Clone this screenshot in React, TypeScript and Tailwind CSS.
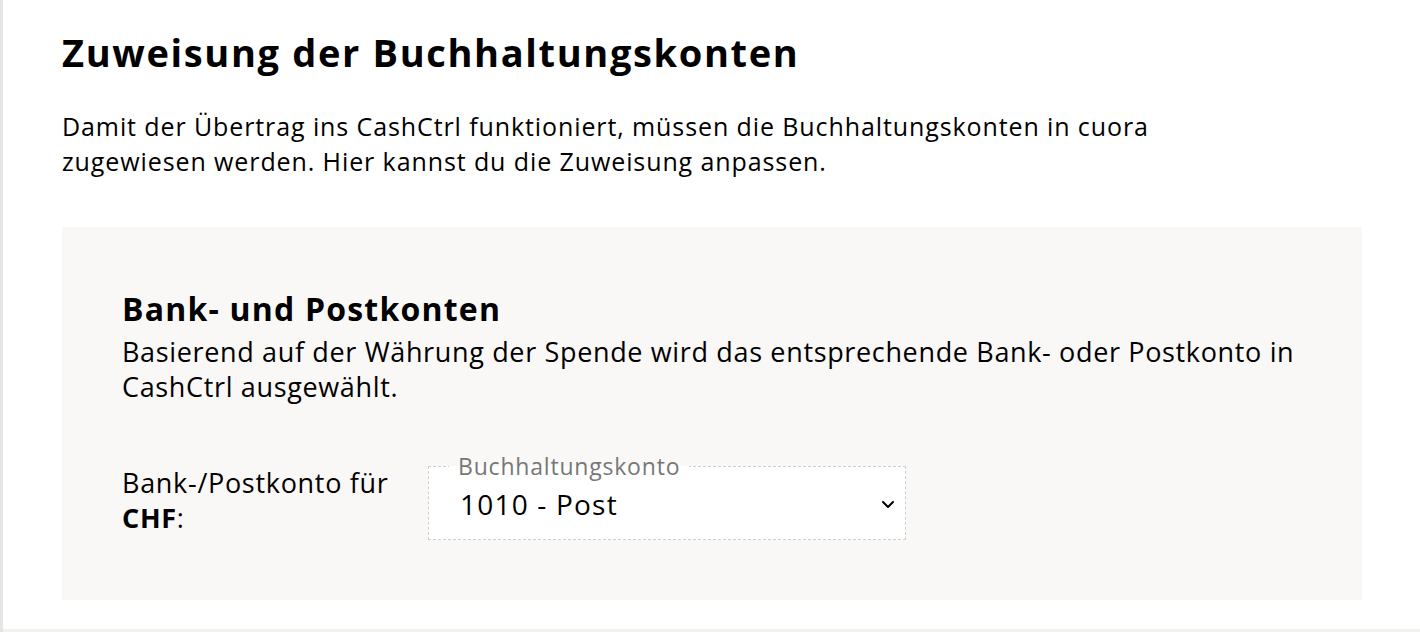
export default function App() {
  return (
    <div
      className="flex h-[632px] w-full overflow-hidden bg-white text-black"
      style={{ fontFamily: '"Open Sans", "Liberation Sans", sans-serif' }}
    >
      <div className="w-[3px] shrink-0 bg-[#e6e5e3]" />
      <div className="flex flex-1 flex-col">
        <main className="pl-[59px] pr-[58px] pt-[26px]">
          <h1 className="text-[38px] font-bold leading-[52px] tracking-[1.65px]">
            Zuweisung der Buchhaltungskonten
          </h1>
          <p className="mt-[31px] w-[1120px] text-[25px] leading-[35px] tracking-[0.9px]">
            Damit der Übertrag ins CashCtrl funktioniert, müssen die Buchhaltungskonten in cuora
            zugewiesen werden. Hier kannst du die Zuweisung anpassen.
          </p>

          <section className="mt-[48px] bg-[#f9f8f7] px-[60px] pb-[60px] pt-[62px]">
            <h2 className="text-[32px] font-bold leading-[40px] tracking-[1.2px]">
              Bank- und Postkonten
            </h2>
            <p className="mt-[5px] text-[27px] leading-[35px] tracking-[0.65px]">
              Basierend auf der Währung der Spende wird das entsprechende Bank- oder Postkonto in
              CashCtrl ausgewählt.
            </p>

            <div className="mt-[50px] flex items-start">
              <label className="mt-[11px] w-[306px] pr-[30px] text-[27px] leading-[35px] tracking-[0.7px]">
                Bank-/Postkonto für <b>CHF</b>:
              </label>
              <fieldset className="h-[86px] w-[478px] border border-dashed border-[#cfcfcf] bg-white pl-[20px] pr-[10px]">
                <legend className="px-[9px] text-[23px] leading-[24px] tracking-[0.8px] text-[#777777]">
                  Buchhaltungskonto
                </legend>
                <div className="mt-[8px] flex items-center justify-between pl-[11px]">
                  <span className="text-[28px] leading-[36px] tracking-[1.2px]">1010 - Post</span>
                  <svg
                    width="14"
                    height="9"
                    viewBox="0 0 14 9"
                    fill="none"
                    stroke="black"
                    strokeWidth="2"
                    strokeLinecap="round"
                    strokeLinejoin="round"
                  >
                    <path d="M2 2l5 5 5-5" />
                  </svg>
                </div>
              </fieldset>
            </div>
          </section>
        </main>
        <div className="mt-[29px] h-[4px] w-full bg-[#f1f1f0]" />
      </div>
    </div>
  );
}
